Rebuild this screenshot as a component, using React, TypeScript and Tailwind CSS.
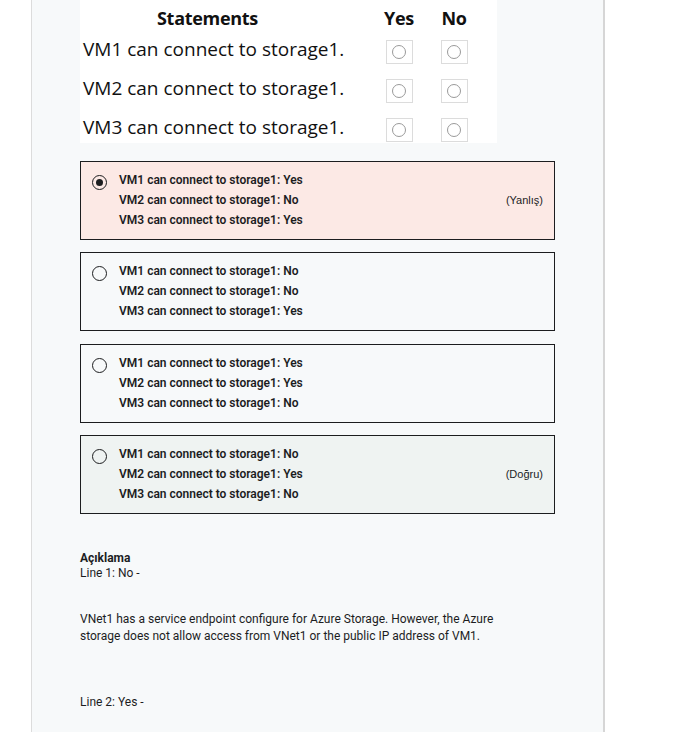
import React from "react";

const rows = [
  "VM1 can connect to storage1.",
  "VM2 can connect to storage1.",
  "VM3 can connect to storage1.",
];

const options = [
  {
    lines: ["VM1 can connect to storage1: Yes", "VM2 can connect to storage1: No", "VM3 can connect to storage1: Yes"],
    selected: true,
    tag: "(Yanlış)",
    bg: "bg-[#fce9e5]",
  },
  {
    lines: ["VM1 can connect to storage1: No", "VM2 can connect to storage1: No", "VM3 can connect to storage1: Yes"],
    selected: false,
    tag: "",
    bg: "bg-[#f7f9fa]",
  },
  {
    lines: ["VM1 can connect to storage1: Yes", "VM2 can connect to storage1: Yes", "VM3 can connect to storage1: No"],
    selected: false,
    tag: "",
    bg: "bg-[#f7f9fa]",
  },
  {
    lines: ["VM1 can connect to storage1: No", "VM2 can connect to storage1: Yes", "VM3 can connect to storage1: No"],
    selected: false,
    tag: "(Doğru)",
    bg: "bg-[#eff3f2]",
  },
];

function Box() {
  return (
    <div className="w-[27px] h-[24px] border border-[#dcdcdc] bg-white flex items-center justify-center">
      <div className="w-[14px] h-[14px] rounded-full border border-[#9a9a9a]" />
    </div>
  );
}

export default function App() {
  return (
    <div className="w-[692px] h-[747px] bg-white overflow-hidden">
      <div className="ml-[31px] w-[574px] h-[732px] bg-[#f7f9fa] border-l border-r-2 border-l-[#dcdcdc] border-r-[#d6d6d6] px-[48px] text-[#1c1d1f] font-['Roboto',sans-serif]">
        {/* question image */}
        <div className="w-[417px] h-[143px] bg-white overflow-hidden font-['Open_Sans',sans-serif] text-[#111]">
          <div className="h-[30px] pt-[6px] flex items-center">
            <div className="w-[292px] pl-[77px] text-[18px] font-bold tracking-[-0.3px]">Statements</div>
            <div className="w-[50px] text-center text-[18px] font-bold tracking-[-0.3px] pl-[4px]">Yes</div>
            <div className="w-[64px] text-center text-[18px] font-bold tracking-[-0.3px]">No</div>
          </div>
          {rows.map((r) => (
            <div key={r} className="h-[39px] flex items-center">
              <div className="w-[292px] pl-[3px] text-[19px] tracking-[0px] leading-none">{r}</div>
              <div className="w-[50px] flex justify-center pl-[4px] mt-[4px]">
                <Box />
              </div>
              <div className="w-[64px] flex justify-center mt-[4px]">
                <Box />
              </div>
            </div>
          ))}
        </div>

        {/* options */}
        <div className="mt-[18px] flex flex-col gap-[12.3px]">
          {options.map((o, i) => (
            <div
              key={i}
              className={`h-[79px] border border-[#1c1d1f] ${o.bg} pl-[11px] pr-[11px] pt-[8px] flex items-start`}
            >
              <div className="mt-[5px] w-[15px] h-[15px] rounded-full border-[1.5px] border-[#1c1d1f] flex items-center justify-center shrink-0">
                {o.selected && <div className="w-[7px] h-[7px] rounded-full bg-[#1c1d1f]" />}
              </div>
              <div className="ml-[12px] flex-1 flex flex-col text-[12px] leading-[20px] font-semibold">
                {o.lines.map((l) => (
                  <div key={l}>{l}</div>
                ))}
              </div>
              {o.tag && (
                <div className="self-center -mt-[8px] text-[11px] text-[#1c1d1f] font-['Liberation_Sans',sans-serif]">
                  {o.tag}
                </div>
              )}
            </div>
          ))}
        </div>

        {/* explanation */}
        <div className="mt-[37px] text-[12px] leading-[15px]">
          <div className="font-bold">Açıklama</div>
          <div>Line 1: No -</div>
          <div className="mt-[30px] leading-[17px]">
            VNet1 has a service endpoint configure for Azure Storage. However, the Azure
            <br />
            storage does not allow access from VNet1 or the public IP address of VM1.
          </div>
          <div className="mt-[50px]">Line 2: Yes -</div>
        </div>
      </div>
    </div>
  );
}
